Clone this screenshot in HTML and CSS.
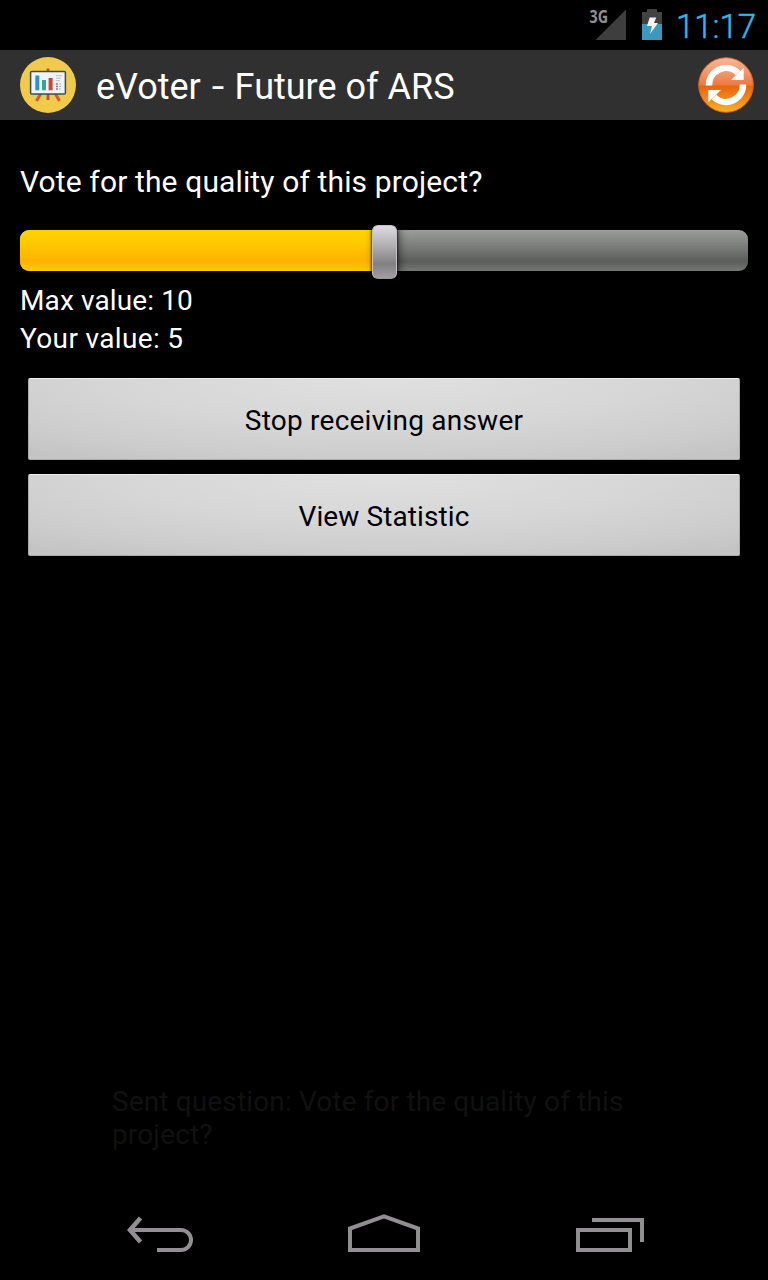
FILE: index.html
```html
<!DOCTYPE html>
<html lang="en">
<head>
<meta charset="utf-8">
<title>eVoter - Future of ARS</title>
<link rel="stylesheet" href="styles.css">
</head>
<body>
<div class="screen">
  <div class="status-bar">
    <svg class="signal" width="40" height="40" viewBox="0 -6 40 40">
      <path d="M7.500 32H38V1.500z" fill="#3e3e3e"/>
      <text x="1.500" y="15" class="signal-label" textLength="18.500" lengthAdjust="spacingAndGlyphs">3G</text>
    </svg>
    <svg class="battery" width="20" height="31" viewBox="0 0 20 31">
      <path d="M5 0h10v3h5v12H0V3h5z" fill="#424242"/>
      <path d="M0 15h20v16H0z" fill="#3a99bd"/>
      <path d="M7.700 8.500h6.500l-2.200 5.500h4L8 25l2-8H5z" fill="#f4f4f4"/>
    </svg>
    <span class="clock">11:17</span>
  </div>
  <header class="action-bar">
    <svg class="app-icon" width="56" height="56" viewBox="0 0 56 56">
      <circle cx="28" cy="28" r="28" fill="#efca4b"/>
      <path d="M28 11.500v31.500" stroke="#c84b2c" stroke-width="2.800"/>
      <path d="M21 36l-4.500 8M35 36l4.500 8" stroke="#d9582b" stroke-width="3"/>
      <rect x="10.600" y="14.400" width="34.800" height="22.600" rx="1" fill="#f0f3f8" stroke="#34505e" stroke-width="1.500"/>
      <path d="M17.300 33.300V18.500" stroke="#2b94c4" stroke-width="4"/>
      <path d="M24 33.300V23" stroke="#3da28c" stroke-width="4"/>
      <path d="M30.600 33.300V21" stroke="#c94830" stroke-width="4"/>
      <path d="M36 18.700h6M36 21.200h5M36 23.700h4" stroke="#bbbfc5"/>
      <path d="M36 27h2M36 32h2" stroke="#d06550" stroke-width="1.500"/>
      <path d="M36 29.500h2" stroke="#3da28c" stroke-width="1.500"/>
      <path d="M39 27h2M39 29.500h2M39 32h2" stroke="#aeb3b9"/>
    </svg>
    <h1 class="title">eVoter <span class="dash">-</span> Future of ARS</h1>
    <svg class="refresh" width="56" height="56" viewBox="0 0 56 56">
      <defs>
        <linearGradient id="orb" x1="0" y1="0" x2="0" y2="1">
          <stop offset="0" stop-color="#f8b79a"/>
          <stop offset=".25" stop-color="#f39a70"/>
          <stop offset=".5" stop-color="#ec7840"/>
          <stop offset=".52" stop-color="#e9650c"/>
          <stop offset=".8" stop-color="#f3901d"/>
          <stop offset="1" stop-color="#fbb324"/>
        </linearGradient>
      </defs>
      <circle cx="28" cy="28" r="27.300" fill="url(#orb)" stroke="#d9651c" stroke-width="1"/>
      <path d="M11 28.500A17 17 0 0 1 40 16" fill="none" stroke="#fff" stroke-width="6.500"/>
      <path d="M45.700 10.800V23H33z" fill="#fff"/>
      <path d="M45 27.500A17 17 0 0 1 16 40" fill="none" stroke="#fff" stroke-width="6.500"/>
      <path d="M10.300 45.200V33H23z" fill="#fff"/>
    </svg>
  </header>
  <main class="content">
    <p class="question">Vote for the quality of this project?</p>
    <div class="slider">
      <div class="fill"></div>
      <div class="thumb"></div>
    </div>
    <p class="value max">Max value: 10</p>
    <p class="value yours">Your value: 5</p>
    <div class="actions">
      <button class="action stop">Stop receiving answer</button>
      <button class="action view">View Statistic</button>
    </div>
  </main>
  <div class="toast">Sent question: Vote for the quality of this project?</div>
  <nav class="nav-bar">
    <svg width="68" height="40" viewBox="0 0 68 40" fill="none" stroke="#918f91" stroke-width="4">
      <path d="M4 16H55A9.900 9.900 0 0 1 55 36H31"/>
      <path d="M14.500 4L4 16L14.500 28" stroke-width="4.500"/>
    </svg>
    <svg class="home" width="72" height="40" viewBox="0 0 72 40" fill="none" stroke="#918f91" stroke-width="4">
      <path d="M2 36V14.500L36 2.300L70 14.500V36z"/>
    </svg>
    <svg width="68" height="40" viewBox="0 0 68 40" fill="none" stroke="#918f91" stroke-width="4">
      <path d="M2 16H54V36H2z"/>
      <path d="M16 6H66V28"/>
    </svg>
  </nav>
</div>
</body>
</html>
```
FILE: styles.css
```css
* {
  box-sizing: border-box;
}

body {
  margin: 0;
  background: #000;
  font-family: Roboto, "Liberation Sans", sans-serif;
  color: #fff;
}

.screen {
  display: flex;
  flex-direction: column;
  width: 768px;
  height: 1280px;
  background: #000;
  overflow: hidden;
}

.status-bar {
  display: flex;
  justify-content: flex-end;
  align-items: flex-start;
  height: 50px;
  padding-right: 12px;
}

.signal {
  margin-top: 2px;
  margin-right: 14px;
}

.signal-label {
  font: bold 17px "Open Sans", sans-serif;
  fill: #909090;
}

.battery {
  margin-top: 9px;
  margin-right: 14px;
}

.clock {
  width: 80px;
  font-size: 33px;
  line-height: 53px;
  font-weight: 350;
  white-space: nowrap;
  color: #33b5e5;
  -webkit-text-stroke: 0.5px #33b5e5;
}

.action-bar {
  display: flex;
  align-items: center;
  height: 70px;
  padding: 0 14px 0 20px;
  background: #303030;
}

.title {
  flex: 1;
  margin: 0 0 0 20px;
  font-size: 36px;
  font-weight: 400;
  line-height: 42px;
  padding-top: 3px;
}

.dash {
  display: inline-block;
  margin: 0 3px;
  transform: scaleX(1.25);
}

.content {
  height: 945px;
  padding: 42px 20px 0;
}

.question {
  margin: 0;
  font-size: 30px;
  line-height: 40px;
  letter-spacing: 0.13px;
}

.slider {
  position: relative;
  height: 41px;
  margin: 28px 0 11px;
  border-radius: 9px;
  background: linear-gradient(#a09ca0, #8e918e 15%, #737673 48%, #5a5d5a 76%, #747774);
}

.fill {
  width: 364px;
  height: 41px;
  border-radius: 9px 0 0 9px;
  background: linear-gradient(#ffd300, #ffcb00 30%, #ffb200 75%, #ffca00);
}

.thumb {
  position: absolute;
  left: 352px;
  top: -5px;
  width: 25px;
  height: 54px;
  border: 1px solid #c4c2c4;
  border-bottom-color: #999;
  border-radius: 6px;
  background: linear-gradient(#dddbdd, #b5b3b5 35%, #828082 73%, #a19fa1);
  box-shadow: 0 0 2px 1px rgba(0, 0, 0, .55), 2px 0 9px rgba(0, 0, 0, .55);
}

.value {
  margin: 0;
  font-size: 28px;
  line-height: 38px;
}

.max {
  letter-spacing: 0.12px;
}

.yours {
  letter-spacing: 0.35px;
}

.actions {
  display: flex;
  flex-direction: column;
  gap: 14px;
  margin: 20px 8px 0;
}

.action {
  height: 82px;
  padding: 3px 0 0;
  border: 1px solid #aaa;
  border-top-color: #ededed;
  border-radius: 2px;
  background: radial-gradient(ellipse 620px 110px at 50% 0, #e1e0e1, #d7d6d7 45%, #cdcccd 72%, #c5c4c5 88%);
  font: 400 28px/38px Roboto, "Liberation Sans", sans-serif;
  color: #000;
}

.stop {
  letter-spacing: 0.23px;
}

.view {
  letter-spacing: 0.1px;
}

.toast {
  height: 120px;
  padding: 20px 112px 0;
  font-size: 28px;
  line-height: 33px;
  letter-spacing: 0.14px;
  color: #101110;
}

.nav-bar {
  display: flex;
  justify-content: flex-start;
  height: 95px;
  padding: 29px 0 0 126px;
}

.home {
  margin: 0 156px 0 154px;
}
```
